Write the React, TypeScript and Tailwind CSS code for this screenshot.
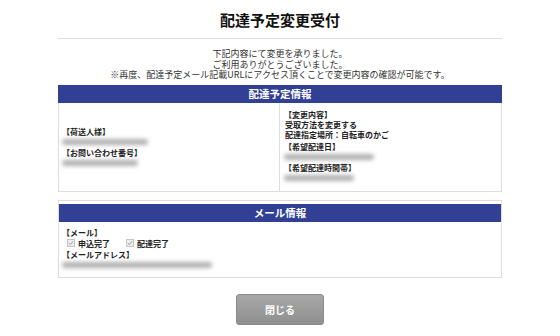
import React from "react";

const font = { fontFamily: '"Noto Sans CJK JP", "Noto Sans", sans-serif' };

function Blur({ w }: { w: number }) {
  // stands in for the masked personal data in the screenshot
  return (
    <div className="flex h-[10px] items-center">
      <div
        className="h-[6px] rounded-full bg-[#b0b0b0] blur-[2px]"
        style={{ width: w }}
      />
    </div>
  );
}

function Check({ label }: { label: string }) {
  return (
    <span className="flex items-center gap-[3px]">
      <svg width="8" height="8" viewBox="0 0 8 8">
        <rect x="0.5" y="0.5" width="7" height="7" fill="#eeeeee" stroke="#c4c4c4" />
        <path d="M1.8 4.2 L3.3 5.6 L6.2 2.2" fill="none" stroke="#9a9a9a" strokeWidth="1" />
      </svg>
      <span>{label}</span>
    </span>
  );
}

function PanelHeader({ title }: { title: string }) {
  return (
    <div className="flex h-[18px] items-center justify-center bg-[#313f94] text-[10.5px] font-bold text-white">
      {title}
    </div>
  );
}

export default function App() {
  return (
    <div className="min-h-[336px] bg-white text-[#222]" style={font}>
      <div className="mx-auto w-[444px] pt-[10px]">
        <h1 className="text-center text-[15px] font-bold leading-[20px] text-[#111]">
          配達予定変更受付
        </h1>
        <div className="mt-[8px] h-px bg-[#dddddd]" />

        <div className="mt-[10px] text-center text-[9px] leading-[10.5px] text-[#333]">
          <p>下記内容にて変更を承りました。</p>
          <p>ご利用ありがとうございました。</p>
          <p>※再度、配達予定メール記載URLにアクセス頂くことで変更内容の確認が可能です。</p>
        </div>

        {/* 配達予定情報 */}
        <div className="mt-[4px]">
          <PanelHeader title="配達予定情報" />
          <div className="grid grid-cols-2 border border-t-0 border-[#dddddd] text-[8px] font-bold leading-[10px] text-[#222]">
            <div className="flex flex-col justify-center border-r border-[#dddddd] pl-[3px] pt-[2px]">
              <p>【荷送人様】</p>
              <Blur w={86} />
              <p className="mt-[1px]">【お問い合わせ番号】</p>
              <Blur w={76} />
            </div>
            <div className="pb-[8px] pl-[4px] pt-[7px]">
              <p>【変更内容】</p>
              <p className="pl-[1px]">受取方法を変更する</p>
              <p className="pl-[1px]">配達指定場所：自転車のかご</p>
              <p className="mt-[2px]">【希望配達日】</p>
              <Blur w={90} />
              <p className="mt-[1px]">【希望配達時間帯】</p>
              <Blur w={70} />
            </div>
          </div>
        </div>

        {/* メール情報 */}
        <div className="mt-[8px] border border-[#dddddd] pt-[3px]">
          <PanelHeader title="メール情報" />
          <div className="pb-[7px] pl-[3px] pt-[5px] text-[8px] font-bold leading-[11px] text-[#222]">
            <p>【メール】</p>
            <div className="flex gap-[16px] pl-[5px]">
              <Check label="申込完了" />
              <Check label="配達完了" />
            </div>
            <p>【メールアドレス】</p>
            <Blur w={150} />
          </div>
        </div>

        <div className="mt-[16px] flex justify-center">
          <button className="h-[31px] w-[88px] rounded-[3px] border border-[#8a8a8a] bg-gradient-to-b from-[#a8a8a8] to-[#8f8f8f] text-[10px] font-bold text-white">
            閉じる
          </button>
        </div>
      </div>
    </div>
  );
}
